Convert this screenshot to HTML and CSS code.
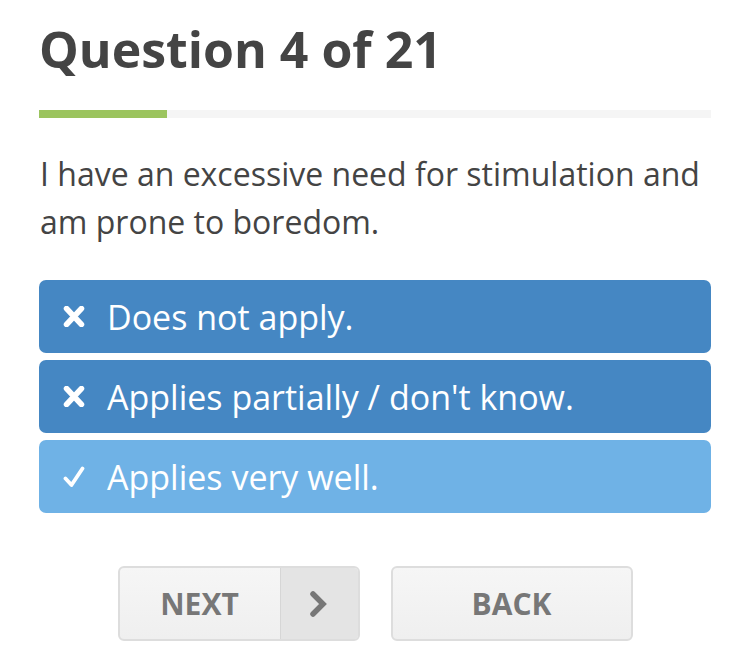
FILE: index.html
```html
<!DOCTYPE html>
<html>
<head>
<meta charset="utf-8">
<link rel="stylesheet" href="styles.css">
</head>
<body>
<div class="page">
  <h1 class="title">Question 4 of 21</h1>
  <div class="progress"><div class="progress-fill" style="width:19%"></div></div>
  <p class="question">I have an excessive need for stimulation and am prone to boredom.</p>
  <div class="options">
    <div class="option">
      <span class="icon"><svg width="22" height="21" viewBox="0 0 22 21"><path d="M3.5 2.5 L18.5 18.5 M18.5 2.5 L3.5 18.5" stroke="#fff" stroke-width="5.5" stroke-linecap="round"/></svg></span>
      <span>Does not apply.</span>
    </div>
    <div class="option">
      <span class="icon"><svg width="22" height="21" viewBox="0 0 22 21"><path d="M3.5 2.5 L18.5 18.5 M18.5 2.5 L3.5 18.5" stroke="#fff" stroke-width="5.5" stroke-linecap="round"/></svg></span>
      <span>Applies partially / don't know.</span>
    </div>
    <div class="option selected">
      <span class="icon"><svg width="22" height="22" viewBox="0 0 22 22"><path d="M2.5 12.5 L8.5 19 L19.5 2.5" stroke="#fff" stroke-width="3.8" fill="none" stroke-linecap="round" stroke-linejoin="round"/></svg></span>
      <span>Applies very well.</span>
    </div>
  </div>
  <div class="buttons">
    <div class="btn next">
      <span class="btn-label">NEXT</span>
      <span class="btn-arrow"><svg width="20" height="28" viewBox="0 0 20 28"><path d="M4 4 L14 14 L4 24" stroke="#777" stroke-width="5.5" fill="none" stroke-linecap="round" stroke-linejoin="miter"/></svg></span>
    </div>
    <div class="btn back"><span class="btn-label">BACK</span></div>
  </div>
</div>
</body>
</html>
```

FILE: styles.css
```css
* { box-sizing: border-box; }
html, body { margin: 0; padding: 0; background: #fff; }
body { font-family: "Open Sans", "DejaVu Sans", sans-serif; }
.page { padding: 17px 39px 0 39px; }
.title {
  margin: 0;
  font-size: 50px;
  font-weight: 700;
  color: #444;
  line-height: 64px;
  padding-left: 0;
}
.progress {
  margin-top: 29px;
  height: 8px;
  background: #f5f5f5;
}
.progress-fill { height: 100%; background: #9bc45e; }
.question {
  margin: 32px 0 0 1px;
  font-size: 32px;
  line-height: 48px;
  color: #444;
}
.options {
  margin-top: 34px;
  display: flex;
  flex-direction: column;
  gap: 7px;
}
.option {
  height: 73px;
  border-radius: 7px;
  background: #4587c3;
  color: #fff;
  display: flex;
  align-items: center;
  font-size: 34px;
  padding-left: 24px;
}
.option.selected { background: #6fb2e6; }
.icon { width: 44px; flex: none; display: flex; align-items: center; }
.icon svg { flex: none; }
.buttons {
  margin-top: 53px;
  display: flex;
  justify-content: center;
  gap: 31px;
}
.btn {
  height: 75px;
  width: 242px;
  border: 2px solid #ddd;
  border-radius: 6px;
  background: linear-gradient(#f6f6f6, #efefef);
  display: flex;
  align-items: center;
  justify-content: center;
  color: #777;
  font-weight: 700;
  font-size: 30px;
  overflow: hidden;
}
.btn.next { justify-content: flex-start; }
.next .btn-label { width: 160px; text-align: center; }
.btn-arrow {
  flex: 1;
  height: 100%;
  background: #e4e4e4;
  border-left: 1px solid #d6d6d6;
  display: flex;
  align-items: center;
  justify-content: center;
}
```
